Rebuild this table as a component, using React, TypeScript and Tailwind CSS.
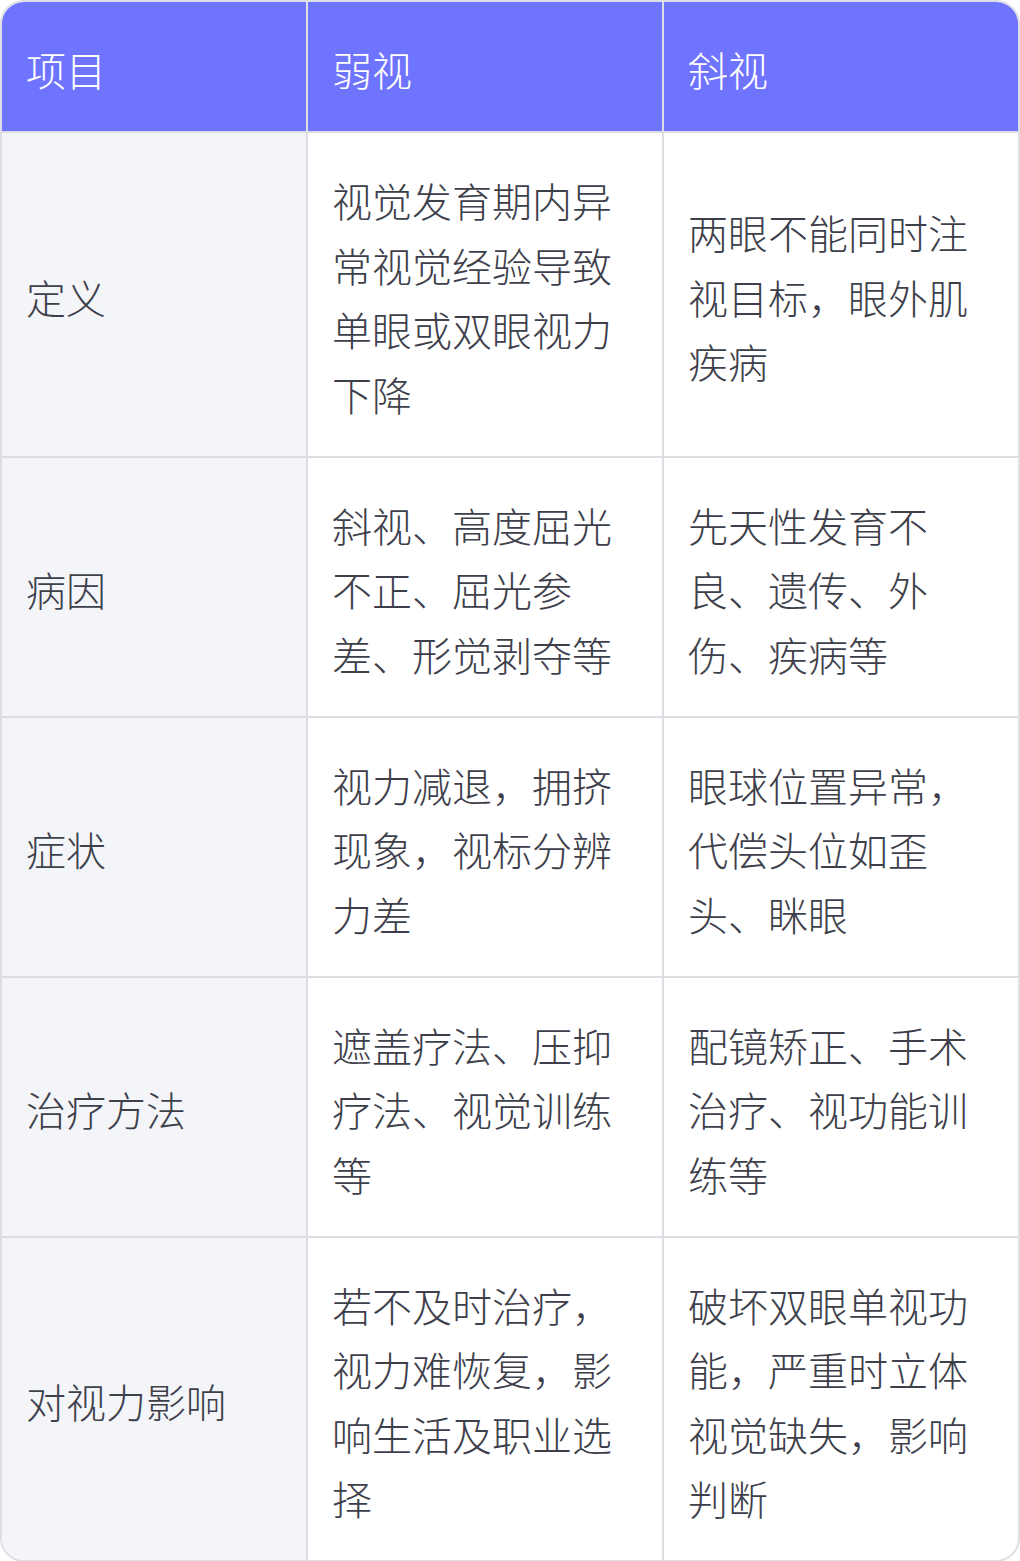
import React from "react";

const rows = [
  {
    item: "定义",
    weak: "视觉发育期内异常视觉经验导致单眼或双眼视力下降",
    squint: "两眼不能同时注视目标，眼外肌疾病",
  },
  {
    item: "病因",
    weak: "斜视、高度屈光不正、屈光参差、形觉剥夺等",
    squint: "先天性发育不良、遗传、外伤、疾病等",
  },
  {
    item: "症状",
    weak: "视力减退，拥挤现象，视标分辨力差",
    squint: "眼球位置异常，代偿头位如歪头、眯眼",
  },
  {
    item: "治疗方法",
    weak: "遮盖疗法、压抑疗法、视觉训练等",
    squint: "配镜矫正、手术治疗、视功能训练等",
  },
  {
    item: "对视力影响",
    weak: "若不及时治疗，视力难恢复，影响生活及职业选择",
    squint: "破坏双眼单视功能，严重时立体视觉缺失，影响判断",
  },
];

export default function App() {
  return (
    <div
      className="w-[1020px] bg-white font-light"
      style={{ fontFamily: '"Noto Sans CJK SC", "Noto Sans", sans-serif' }}
    >
      <div className="border-2 border-[#dedfe5] rounded-[24px] overflow-hidden">
        <table className="w-full table-fixed border-separate border-spacing-0 text-[40px] leading-[64.5px]">
          <colgroup>
            <col className="w-[306px]" />
            <col className="w-[356px]" />
            <col className="w-[354px]" />
          </colgroup>
          <thead>
            <tr className="bg-[#6f74ff] text-white text-left">
              <th className="font-light px-6 pt-[35px] pb-[29.5px] border-r-2 border-b-2 border-[#dcdde3]">项目</th>
              <th className="font-light px-6 pt-[35px] pb-[29.5px] border-r-2 border-b-2 border-[#dcdde3]">弱视</th>
              <th className="font-light px-6 pt-[35px] pb-[29.5px] border-b-2 border-[#dcdde3]">斜视</th>
            </tr>
          </thead>
          <tbody className="text-[#3d404b]">
            {rows.map((r, i) => {
              const last = i === rows.length - 1;
              return (
                <tr key={r.item}>
                  <td
                    className={`align-middle bg-[#f4f5f9] px-6 pt-[35px] pb-[29.5px] border-r-2 border-[#dcdde3] ${last ? "" : "border-b-2"}`}
                  >
                    {r.item}
                  </td>
                  <td
                    className={`align-middle px-6 pt-[35px] pb-[29.5px] border-r-2 border-[#dcdde3] ${last ? "" : "border-b-2"}`}
                  >
                    {r.weak}
                  </td>
                  <td
                    className={`align-middle px-6 pt-[35px] pb-[29.5px] border-[#dcdde3] ${last ? "" : "border-b-2"}`}
                  >
                    {r.squint}
                  </td>
                </tr>
              );
            })}
          </tbody>
        </table>
      </div>
    </div>
  );
}
